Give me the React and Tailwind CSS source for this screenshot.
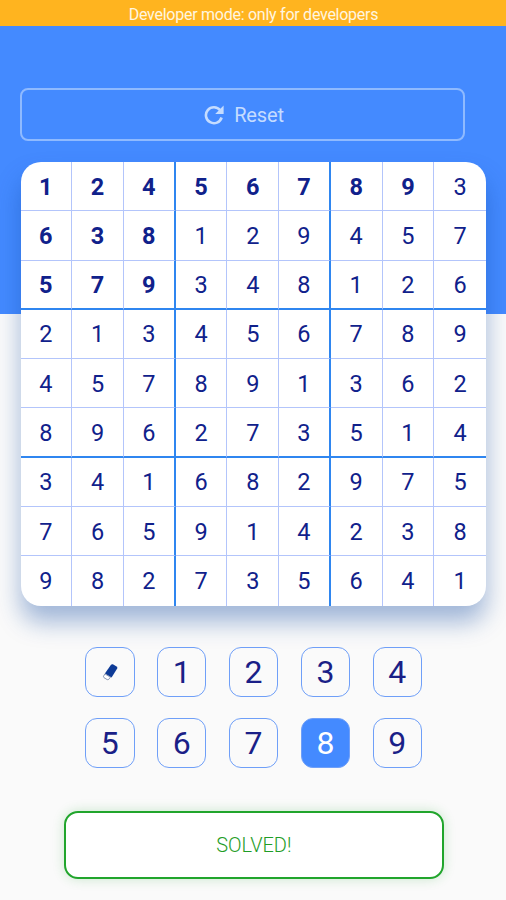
const board = [
  [1, 2, 4, 5, 6, 7, 8, 9, 3],
  [6, 3, 8, 1, 2, 9, 4, 5, 7],
  [5, 7, 9, 3, 4, 8, 1, 2, 6],
  [2, 1, 3, 4, 5, 6, 7, 8, 9],
  [4, 5, 7, 8, 9, 1, 3, 6, 2],
  [8, 9, 6, 2, 7, 3, 5, 1, 4],
  [3, 4, 1, 6, 8, 2, 9, 7, 5],
  [7, 6, 5, 9, 1, 4, 2, 3, 8],
  [9, 8, 2, 7, 3, 5, 6, 4, 1],
]

// How many leading cells of each row are fixed
const givens = [8, 3, 3, 0, 0, 0, 0, 0, 0]

const selected = 8

function ResetIcon() {
  return (
    <svg viewBox="0 0 20 20" className="size-5" fill="none">
      <path d="M16.2 5.2 A8 8 0 1 0 17.6 12.5" stroke="currentColor" strokeWidth="2.6" />
      <path d="M19.6 0.6 V9 H11.2 Z" fill="currentColor" />
    </svg>
  )
}

function EraserIcon() {
  return (
    <svg viewBox="0 0 16 18" className="w-4 h-[18px]">
      <path d="M9 1.8 Q9.8 0.9 10.9 1.3 L14.6 3.4 Q15.8 4.2 15.2 5.5 L9.6 14.4 L2.9 10.4 Z" fill="#0d3a96" />
      <path d="M2.9 10.9 L8.4 14.2 L6.7 16.4 Q6.1 17 5.2 16.6 L2 14.7 Q1.1 14 1.6 13.1 Z" fill="#fff" stroke="#5d7096" strokeWidth="0.7" />
    </svg>
  )
}

function Cell({ value, row, col }) {
  const right = col === 8 ? '' : col % 3 === 2 ? 'border-r-2 border-r-[#2f86f0]' : 'border-r border-r-[#b3c5fb]'
  const bottom = row === 8 ? '' : row % 3 === 2 ? 'border-b-2 border-b-[#2f86f0]' : 'border-b border-b-[#b3c5fb]'
  const weight = col < givens[row] ? 'font-bold' : 'font-normal'
  return (
    <div className={`flex items-center justify-center pt-[2.5px] ${right} ${bottom} ${weight}`}>
      {value}
    </div>
  )
}

function PadButton({ value }) {
  const color = value === selected ? 'bg-[#448aff] text-white' : 'text-[#1a1f87]'
  return (
    <button className={`flex h-[50px] items-center justify-center rounded-xl border border-[#6f9ff8] text-[32px] leading-none ${color}`}>
      {value === 0 ? <EraserIcon /> : value}
    </button>
  )
}

function App() {
  return (
    <div className="h-[900px] w-[506px] overflow-hidden bg-[linear-gradient(#448aff_314px,#fafafa_314px)] font-[Roboto,sans-serif]">
      <div className="flex h-[26px] items-center justify-center bg-[#ffb41f] pt-[3px] pl-px text-base leading-none tracking-[-0.26px] text-[#fff6e0]">
        Developer mode: only for developers
      </div>

      <button className="mt-[62px] ml-5 flex h-[53px] w-[445px] items-center justify-center gap-[10px] rounded-lg border-2 border-[#8fbaff] pl-[3px] text-xl tracking-[-0.15px] text-[#c5dcff]">
        <ResetIcon />
        Reset
      </button>

      <div className="mt-[21px] ml-[20.5px] grid h-[443.5px] w-[465.5px] grid-cols-9 grid-rows-9 overflow-hidden rounded-[20px] bg-white text-[23.5px] leading-none text-[#10218b] shadow-[0_16px_24px_rgba(13,71,161,0.38)]">
        {board.map((cells, row) =>
          cells.map((value, col) => <Cell key={`${row}-${col}`} value={value} row={row} col={col} />)
        )}
      </div>

      <div className="mt-[41.5px] ml-[85px] grid w-[337px] grid-cols-[repeat(5,49.5px)] justify-between gap-y-[21px]">
        {[0, 1, 2, 3, 4, 5, 6, 7, 8, 9].map((value) => (
          <PadButton key={value} value={value} />
        ))}
      </div>

      <div className="mt-[43px] ml-16 flex h-[68px] w-[379.5px] items-center justify-center rounded-[14px] border-2 border-[#21a52c] bg-white text-xl font-light tracking-[-0.05px] text-[#1f9d27] shadow-[0_0_12px_rgba(33,165,44,0.22)]">
        SOLVED!
      </div>
    </div>
  )
}

export default App
